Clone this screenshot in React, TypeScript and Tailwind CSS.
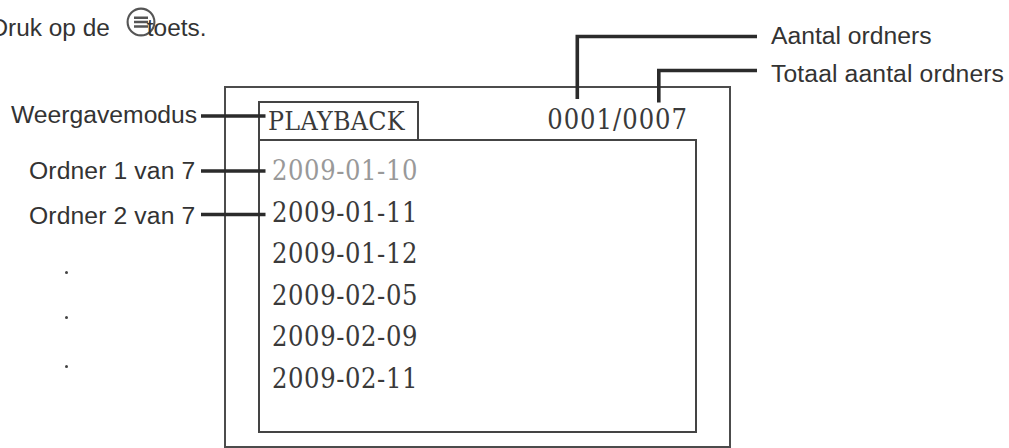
const folders = [
  { date: "2009-01-10", dimmed: true },
  { date: "2009-01-11" },
  { date: "2009-01-12" },
  { date: "2009-02-05" },
  { date: "2009-02-09" },
  { date: "2009-02-11" },
];

function MenuKeyIcon() {
  return (
    <svg
      viewBox="0 0 30 30"
      className="-mr-[9px] mb-[12px] ml-[16px] h-[30px] w-[30px] shrink-0"
      fill="none"
      stroke="#555"
    >
      <circle cx="15" cy="15" r="13.4" strokeWidth="2.1" />
      <path d="M8 10.7H22M8 15.1H22M8 19.5H22" strokeWidth="2.5" />
    </svg>
  );
}

function Instruction() {
  return (
    <p className="flex h-[56px] items-center text-[24.4px] leading-[30px]">
      <span className="-ml-[9.5px] whitespace-nowrap">Druk op de</span>
      <MenuKeyIcon />
      <span className="relative">toets.</span>
    </p>
  );
}

function LeftLabels() {
  return (
    <div className="w-[224px] shrink-0 whitespace-nowrap text-[24.7px] leading-[30px]">
      <div className="mt-[14px] pl-[11px]">Weergavemodus</div>
      <div className="mt-[26px] pl-[29px] tracking-[0.12px]">Ordner 1 van 7</div>
      <div className="mt-[15px] pl-[29px] tracking-[0.12px]">Ordner 2 van 7</div>
      <div className="ml-[65px] mt-[40px] size-[3px] rounded-full bg-[#444]" />
      <div className="ml-[65px] mt-[42px] size-[3px] rounded-full bg-[#444]" />
      <div className="ml-[65px] mt-[46px] size-[3px] rounded-full bg-[#444]" />
    </div>
  );
}

function Screen() {
  return (
    <div className="h-[362px] w-[507px] shrink-0 border-2 border-[#4c4c4c] pl-[32px] pr-[32px] pt-[13px] font-['DejaVu_Serif_Condensed','DejaVu_Serif',serif] text-[27px] text-[#3a3a3a] [font-stretch:condensed]">
      <div className="flex h-[38px] justify-between">
        <div className="h-[38px] w-[161px] border-2 border-b-0 border-[#444] pl-[8px] text-[26.5px] leading-[35px] tracking-[0.3px]">
          PLAYBACK
        </div>
        <div className="pr-[9px] leading-[37px] tracking-[1px]">0001/0007</div>
      </div>
      <ul className="h-[294px] border-2 border-[#444] pl-[12px] pt-[10px]">
        {folders.map((folder) => (
          <li
            key={folder.date}
            className={`h-[41.6px] leading-[40px] tracking-[0.6px] ${folder.dimmed ? "text-[#999]" : ""}`}
          >
            {folder.date}
          </li>
        ))}
      </ul>
    </div>
  );
}

function RightLabels() {
  return (
    <div className="absolute left-[771px] top-[21px] whitespace-nowrap text-[24.7px] leading-[30px]">
      <div>Aantal ordners</div>
      <div className="mt-[8px] tracking-[0.12px]">Totaal aantal ordners</div>
    </div>
  );
}

// Leader lines run across the screen frame
function LeaderLines() {
  return (
    <svg
      viewBox="0 0 1009 448"
      className="pointer-events-none absolute inset-0 h-[448px] w-[1009px]"
      fill="none"
      stroke="#2b2b2b"
      strokeWidth="3.6"
    >
      <path d="M201 116H265.5M201 171H265.5M201 214.5H265.5" />
      <path d="M577.3 99V36.5H757M658.8 102.5V70.5H757" />
    </svg>
  );
}

export default function App() {
  return (
    <main className="relative h-[448px] w-[1009px] overflow-hidden bg-white font-['Liberation_Sans',Arial,sans-serif] text-[#333]">
      <Instruction />
      <div className="mt-[30px] flex">
        <LeftLabels />
        <Screen />
      </div>
      <RightLabels />
      <LeaderLines />
    </main>
  );
}
